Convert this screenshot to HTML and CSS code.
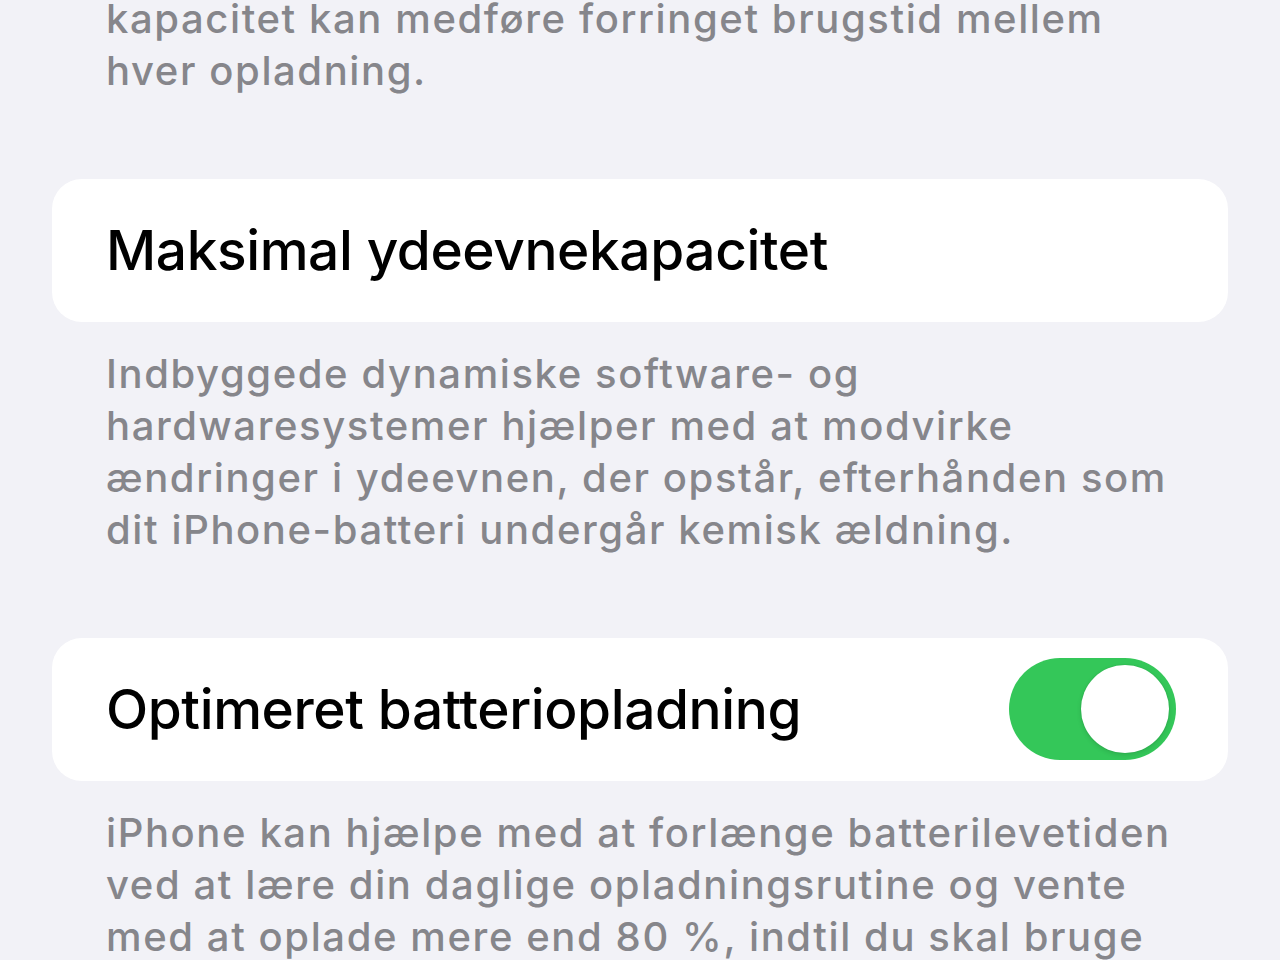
FILE: index.html
```html
<!DOCTYPE html>
<html lang="da">
<head>
<meta charset="utf-8">
<title>Batteritilstand</title>
<link rel="stylesheet" href="styles.css">
</head>
<body>
<main class="settings">
  <p class="footnote footnote-first">
    <span class="line">kapacitet kan medføre forringet brugstid mellem</span>
    <span class="line">hver opladning.</span>
  </p>

  <section class="cell">
    <span class="cell-title">Maksimal ydeevnekapacitet</span>
  </section>
  <p class="footnote">
    <span class="line">Indbyggede dynamiske software- og</span>
    <span class="line">hardwaresystemer hjælper med at modvirke</span>
    <span class="line">ændringer i ydeevnen, der opstår, efterhånden som</span>
    <span class="line">dit iPhone-batteri undergår kemisk ældning.</span>
  </p>

  <section class="cell">
    <span class="cell-title">Optimeret batteriopladning</span>
    <span class="switch is-on" role="switch" aria-checked="true"><span class="knob"></span></span>
  </section>
  <p class="footnote">
    <span class="line">iPhone kan hjælpe med at forlænge batterilevetiden</span>
    <span class="line">ved at lære din daglige opladningsrutine og vente</span>
    <span class="line">med at oplade mere end 80 %, indtil du skal bruge</span>
    <span class="line">den.</span>
  </p>
</main>
</body>
</html>
```

FILE: styles.css
```css
html, body {
  margin: 0;
  padding: 0;
  background: #f2f2f7;
  height: 960px;
  overflow: hidden;
}

.settings {
  display: flex;
  flex-direction: column;
  padding: 0 52px 0 52px;
  font-family: Inter, "Noto Sans", "Liberation Sans", sans-serif;
}

.footnote {
  margin: 26px 0 81px 0;
  padding: 0 0 0 54px;
  color: #86868b;
  font-size: 40px;
  line-height: 52.3px;
  font-weight: 500;
  letter-spacing: 1.6px;
}

.footnote-first {
  margin-top: -7px;
}

.line {
  display: block;
  white-space: nowrap;
}

.cell {
  height: 143px;
  background: #ffffff;
  border-radius: 30px;
  display: flex;
  align-items: center;
  justify-content: space-between;
  padding: 0 52px 0 54px;
  box-sizing: border-box;
}

.cell-title {
  color: #000000;
  font-size: 55px;
  font-weight: 500;
  letter-spacing: -0.4px;
}

.switch {
  width: 167px;
  height: 102px;
  border-radius: 51px;
  background: #34c759;
  display: flex;
  align-items: center;
  justify-content: flex-end;
  padding: 0 7px;
  box-sizing: border-box;
}

.knob {
  width: 88px;
  height: 88px;
  border-radius: 50%;
  background: #ffffff;
  box-shadow: 0 2px 5px rgba(0, 0, 0, 0.12), 0 0 0 1px rgba(0, 0, 0, 0.03);
}
```
